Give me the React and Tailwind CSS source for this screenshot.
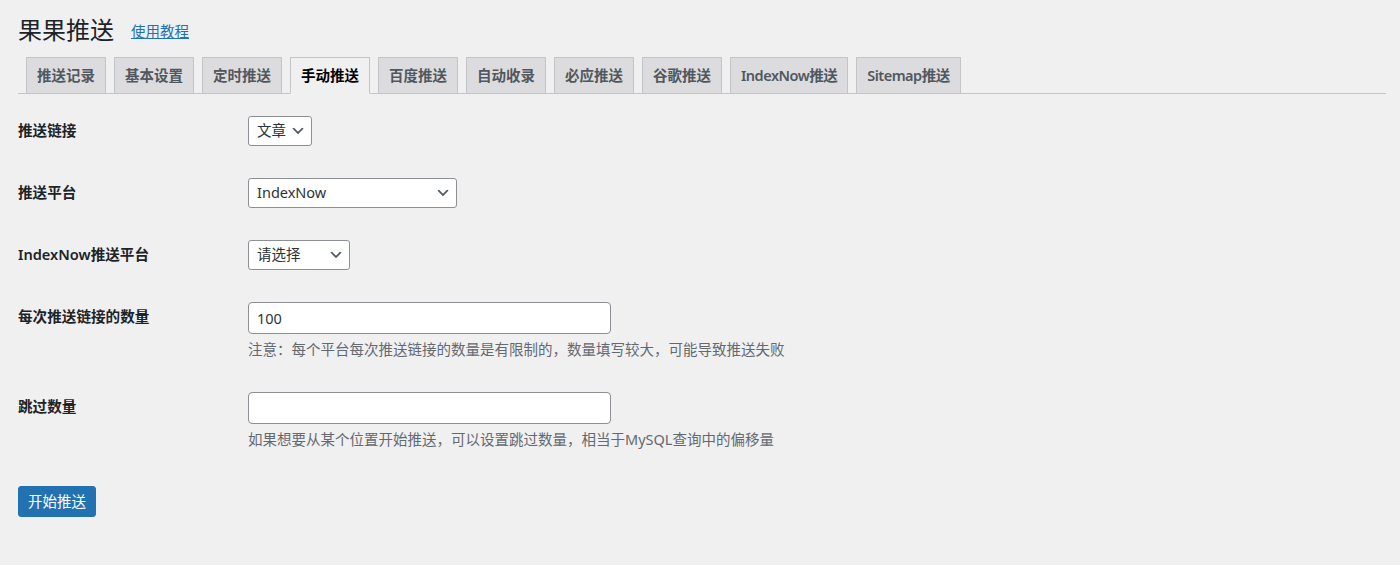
import React, { useState } from "react";

const tabs = [
  "推送记录",
  "基本设置",
  "定时推送",
  "手动推送",
  "百度推送",
  "自动收录",
  "必应推送",
  "谷歌推送",
  "IndexNow推送",
  "Sitemap推送",
];

const Chevron = () => (
  <svg viewBox="0 0 20 20" className="w-4 h-4 shrink-0" fill="#50575e">
    <path d="M5 6l5 5 5-5 2 1-7 7-7-7 2-1z" />
  </svg>
);

// fake WP-style select box
const SelectBox = ({ value, width }) => (
  <div
    className={`flex items-center justify-between h-[30px] pl-[8px] pr-[5px] bg-white border border-[#8c8f94] rounded-[3px] text-[14.5px] text-[#2c3338] ${width}`}
  >
    <span>{value}</span>
    <Chevron />
  </div>
);

const Row = ({ label, children }) => (
  <div className="flex items-start">
    <div className="w-[230px] shrink-0 h-[30px] flex items-center text-[14.6px] font-semibold text-[#1d2327]">
      {label}
    </div>
    <div>{children}</div>
  </div>
);

const App = () => {
  const [selectedTab, setSelectedTab] = useState("手动推送");

  return (
    <div
      className="min-h-[565px] bg-[#f0f0f1] pl-[18px] pr-[14px] pt-[15px]"
      style={{ fontFamily: '"Noto Sans", "Noto Sans CJK SC", sans-serif' }}
    >
      {/* Title */}
      <div className="flex items-center h-[30px]">
        <h1 className="text-[24px] font-normal text-[#1d2327] leading-[30px]">果果推送</h1>
        <a href="#" className="ml-[17px] text-[14.5px] text-[#2271b1] underline mt-[3px]">
          使用教程
        </a>
      </div>

      {/* Tabs */}
      <div className="flex items-end mt-[12px] border-b border-[#c3c4c7]">
        {tabs.map((tab) => (
          <div
            key={tab}
            onClick={() => setSelectedTab(tab)}
            className={`ml-[8px] -mb-px px-[10px] py-[5px] border leading-[25px] text-[14.5px] font-semibold cursor-pointer ${
              /[A-Za-z]/.test(tab) ? "tracking-[-0.5px]" : ""
            } ${
              selectedTab === tab
                ? "bg-[#f0f0f1] text-black border-[#c3c4c7] border-b-[#f0f0f1]"
                : "bg-[#dcdcde] text-[#50575e] border-[#c3c4c7]"
            }`}
          >
            {tab}
          </div>
        ))}
      </div>

      {/* Form */}
      <div className="flex flex-col gap-[32px] pt-[22px]">
        <Row label="推送链接">
          <SelectBox value="文章" width="w-[64px]" />
        </Row>
        <Row label="推送平台">
          <SelectBox value="IndexNow" width="w-[209px]" />
        </Row>
        <Row label="IndexNow推送平台">
          <SelectBox value="请选择" width="w-[102px]" />
        </Row>
        <Row label="每次推送链接的数量">
          <input
            defaultValue="100"
            className="block w-[363px] h-[32px] px-[8px] bg-white border border-[#8c8f94] rounded-[4px] text-[14.5px] text-[#2c3338] outline-none"
          />
          <p className="mt-1 text-[14.5px] leading-[22px] text-[#646970]">
            注意：每个平台每次推送链接的数量是有限制的，数量填写较大，可能导致推送失败
          </p>
        </Row>
        <Row label="跳过数量">
          <input className="block w-[363px] h-[32px] px-[8px] bg-white border border-[#8c8f94] rounded-[4px] text-[14.5px] text-[#2c3338] outline-none" />
          <p className="mt-1 text-[14.5px] leading-[22px] text-[#646970]">
            如果想要从某个位置开始推送，可以设置跳过数量，相当于MySQL查询中的偏移量
          </p>
        </Row>
      </div>

      <button className="mt-[36px] h-[31px] px-[9px] bg-[#2271b1] border border-[#2271b1] rounded-[3px] text-[14.5px] text-white">
        开始推送
      </button>
    </div>
  );
};

export default App;
